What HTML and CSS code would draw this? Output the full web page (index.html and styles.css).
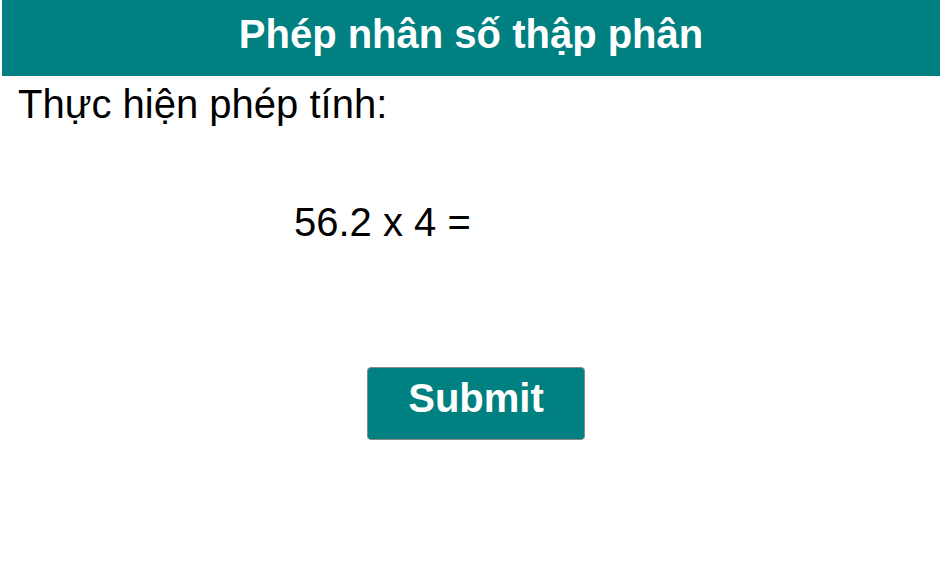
FILE: index.html
```html
<!DOCTYPE html>
<html lang="vi">
<head>
<meta charset="utf-8">
<title>Phép nhân số thập phân</title>
<link rel="stylesheet" href="styles.css">
</head>
<body>
<div class="page">
  <header class="header"><h1 class="title">Phép nhân số thập phân</h1></header>
  <p class="prompt">Thực hiện phép tính:</p>
  <p class="expr">56.2 x 4 =</p>
  <div class="actions"><button class="submit" type="button">Submit</button></div>
</div>
</body>
</html>
```
FILE: styles.css
```css
html, body {
  margin: 0;
  padding: 0;
  background: #ffffff;
}
.page {
  width: 940px;
  height: 564px;
  font-family: "Liberation Sans", Arial, sans-serif;
  color: #000000;
  overflow: hidden;
}
.header {
  box-sizing: border-box;
  margin-left: 2px;
  height: 76px;
  padding-top: 14px;
  background: #008080;
  text-align: center;
}
.title {
  margin: 0;
  font-size: 40px;
  font-weight: bold;
  color: #ffffff;
  line-height: 40px;
}
.prompt {
  margin: 6px 0 0 18px;
  font-size: 40px;
  line-height: 44px;
}
.expr {
  margin: 74px 0 0 294px;
  font-size: 40px;
  line-height: 44px;
}
.actions {
  margin: 123px 0 0 367px;
}
.submit {
  box-sizing: border-box;
  width: 218px;
  height: 73px;
  padding: 0 0 10px 0;
  background: #008080;
  border: 1px solid #8a8a8a;
  border-radius: 4px;
  color: #ffffff;
  font-family: "Liberation Sans", Arial, sans-serif;
  font-size: 40px;
  font-weight: bold;
  display: flex;
  align-items: center;
  justify-content: center;
}
```
